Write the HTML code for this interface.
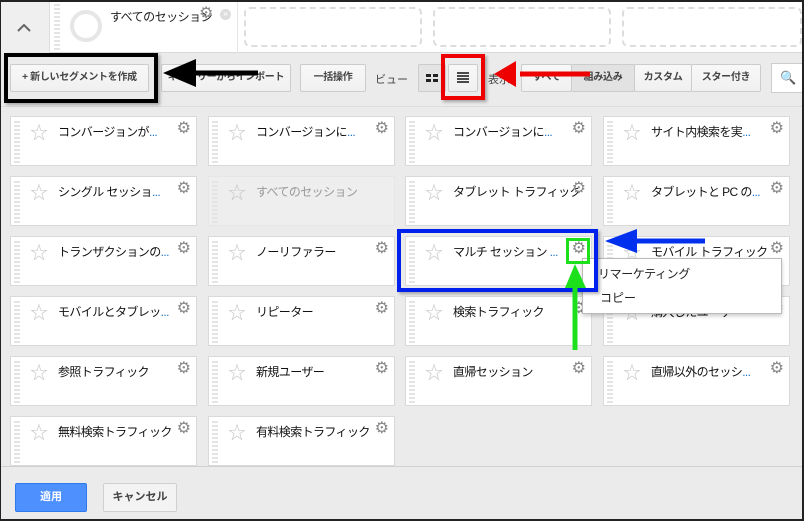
<!DOCTYPE html>
<html><head><meta charset="utf-8">
<style>
*{box-sizing:border-box;margin:0;padding:0}
body{width:804px;height:521px;overflow:hidden;background:#ebebeb;font-family:"Liberation Sans","Noto Sans CJK JP",sans-serif;font-size:12px;color:#222;position:relative}
.abs{position:absolute}
.top{left:0;top:0;width:804px;height:53px;background:#fff;border-bottom:1px solid #d8d8d8}
.chev{left:0;top:0;width:50px;height:53px;background:#efefef;border-right:1px solid #ddd}
.dash{border:2px dashed #ddd;border-radius:6px;top:7px;height:40px}
.btn{border:1px solid #ccc;border-radius:2px;background:linear-gradient(#f8f8f8,#f0f0f0);font-weight:bold;font-size:10px;color:#444;text-align:center;line-height:26px;height:28px;top:64px;white-space:nowrap;overflow:hidden;letter-spacing:-0.3px}
.card{background:#fff;border:1px solid #d9d9d9;width:187px;height:50px}
.card .grip{position:absolute;left:3px;top:4px;width:6px;height:42px;background:repeating-linear-gradient(#e4e4e4 0 2px,transparent 2px 4px)}
.card .st{position:absolute;left:19px;top:2px;font-size:18px;color:#c8c8c8}
.card .t{position:absolute;left:47px;top:6px;font-size:12px;letter-spacing:-0.6px;color:#111;white-space:nowrap;width:125px;overflow:hidden}
.card .g{position:absolute;right:5px;top:1px;font-size:16px;color:#888}
.dots{color:#1a73c8}
</style></head><body>
<div class="abs top"></div>
<div class="abs chev"><svg width="50" height="53"><path d="M18 31 L24 25 L30 31" stroke="#666" stroke-width="2" fill="none"/></svg></div>
<div class="abs" style="left:54px;top:4px;width:6px;height:46px;background:repeating-linear-gradient(#e4e4e4 0 2px,transparent 2px 4px)"></div>
<div class="abs" style="left:70px;top:10px;width:32px;height:32px;border:4px solid #e6e6e6;border-radius:50%"></div>
<div class="abs" style="left:110px;top:8px;font-size:12px;letter-spacing:-0.5px">すべてのセッション</div>
<div class="abs" style="left:199px;top:3px;font-size:16px;color:#888">⚙</div>
<div class="abs" style="left:220px;top:9px;width:11px;height:11px;border-radius:50%;background:#ddd;color:#fff;font-size:9px;line-height:11px;text-align:center">×</div>
<div class="abs" style="left:237px;top:0;width:1px;height:53px;background:#e6e6e6"></div>
<div class="abs dash" style="left:244px;width:178px"></div>
<div class="abs dash" style="left:433px;width:178px"></div>
<div class="abs dash" style="left:622px;width:180px"></div>

<div class="abs btn" style="left:10px;width:139px">+ 新しいセグメントを作成</div>
<div class="abs btn" style="left:161px;width:130px">ギャラリーからインポート</div>
<div class="abs btn" style="left:300px;width:66px">一括操作</div>
<div class="abs" style="left:375px;top:71px;font-size:11px;color:#444">ビュー</div>
<div class="abs btn" style="left:418px;width:28px;background:#e4e4e4"><svg width="26" height="26"><rect x="7" y="9" width="5" height="3" fill="#222"/><rect x="14" y="9" width="5" height="3" fill="#222"/><rect x="7" y="14" width="5" height="3" fill="#222"/><rect x="14" y="14" width="5" height="3" fill="#222"/></svg></div>
<div class="abs btn" style="left:448px;width:30px"><svg width="28" height="26"><path d="M8 8h12M8 11h12M8 14h12M8 17h12" stroke="#111" stroke-width="1.6"/></svg></div>
<div class="abs" style="left:488px;top:71px;font-size:11px;color:#444">表示</div>
<div class="abs btn" style="left:521px;width:51px">すべて</div>
<div class="abs btn" style="left:571px;width:64px;background:#e2e2e2">組み込み</div>
<div class="abs btn" style="left:634px;width:58px">カスタム</div>
<div class="abs btn" style="left:691px;width:70px">スター付き</div>
<div class="abs" style="left:771px;top:63px;width:40px;height:30px;background:#fff;border:1px solid #ccc;color:#bbb;font-size:13px;padding:6px 8px">🔍</div>
<div class="abs" style="left:0;top:106px;width:804px;height:1px;background:#ddd"></div>

<div class="abs card" style="left:10px;top:116px"><div class="grip"></div><div class="st">☆</div><div class="t">コンバージョンが<span class="dots">...</span></div><div class="g">⚙</div></div>
<div class="abs card" style="left:208px;top:116px"><div class="grip"></div><div class="st">☆</div><div class="t">コンバージョンに<span class="dots">...</span></div><div class="g">⚙</div></div>
<div class="abs card" style="left:405px;top:116px"><div class="grip"></div><div class="st">☆</div><div class="t">コンバージョンに<span class="dots">...</span></div><div class="g">⚙</div></div>
<div class="abs card" style="left:603px;top:116px"><div class="grip"></div><div class="st">☆</div><div class="t">サイト内検索を実<span class="dots">...</span></div><div class="g">⚙</div></div>

<div class="abs card" style="left:10px;top:176px"><div class="grip"></div><div class="st">☆</div><div class="t">シングル セッショ<span class="dots">...</span></div><div class="g">⚙</div></div>
<div class="abs card" style="left:208px;top:176px;background:#eee;border-color:#e6e6e6"><div class="grip"></div><div class="st">☆</div><div class="t" style="color:#999">すべてのセッション</div></div>
<div class="abs card" style="left:405px;top:176px"><div class="grip"></div><div class="st">☆</div><div class="t">タブレット トラフィック</div><div class="g">⚙</div></div>
<div class="abs card" style="left:603px;top:176px"><div class="grip"></div><div class="st">☆</div><div class="t">タブレットと PC の<span class="dots">...</span></div><div class="g">⚙</div></div>

<div class="abs card" style="left:10px;top:236px"><div class="grip"></div><div class="st">☆</div><div class="t">トランザクションの<span class="dots">...</span></div><div class="g">⚙</div></div>
<div class="abs card" style="left:208px;top:236px"><div class="grip"></div><div class="st">☆</div><div class="t">ノーリファラー</div><div class="g">⚙</div></div>
<div class="abs card" style="left:405px;top:236px"><div class="grip"></div><div class="st">☆</div><div class="t">マルチ セッション <span class="dots">...</span></div><div class="g">⚙</div></div>
<div class="abs card" style="left:603px;top:236px"><div class="grip"></div><div class="st">☆</div><div class="t">モバイル トラフィック</div><div class="g">⚙</div></div>

<div class="abs card" style="left:10px;top:296px"><div class="grip"></div><div class="st">☆</div><div class="t">モバイルとタブレッ<span class="dots">...</span></div><div class="g">⚙</div></div>
<div class="abs card" style="left:208px;top:296px"><div class="grip"></div><div class="st">☆</div><div class="t">リピーター</div><div class="g">⚙</div></div>
<div class="abs card" style="left:405px;top:296px"><div class="grip"></div><div class="st">☆</div><div class="t">検索トラフィック</div><div class="g">⚙</div></div>
<div class="abs card" style="left:603px;top:296px"><div class="grip"></div><div class="st">☆</div><div class="t">購入したユーザー</div><div class="g">⚙</div></div>

<div class="abs card" style="left:10px;top:356px"><div class="grip"></div><div class="st">☆</div><div class="t">参照トラフィック</div><div class="g">⚙</div></div>
<div class="abs card" style="left:208px;top:356px"><div class="grip"></div><div class="st">☆</div><div class="t">新規ユーザー</div><div class="g">⚙</div></div>
<div class="abs card" style="left:405px;top:356px"><div class="grip"></div><div class="st">☆</div><div class="t">直帰セッション</div><div class="g">⚙</div></div>
<div class="abs card" style="left:603px;top:356px"><div class="grip"></div><div class="st">☆</div><div class="t">直帰以外のセッシ<span class="dots">...</span></div><div class="g">⚙</div></div>

<div class="abs card" style="left:10px;top:416px"><div class="grip"></div><div class="st">☆</div><div class="t">無料検索トラフィック</div><div class="g">⚙</div></div>
<div class="abs card" style="left:208px;top:416px"><div class="grip"></div><div class="st">☆</div><div class="t">有料検索トラフィック</div><div class="g">⚙</div></div>

<div class="abs" style="left:0;top:466px;width:804px;height:1px;background:#d0d0d0"></div>
<div class="abs" style="left:15px;top:483px;width:72px;height:29px;background:#4d90fe;border:1px solid #3079ed;border-radius:2px;color:#fff;font-weight:bold;font-size:11px;text-align:center;line-height:27px">適用</div>
<div class="abs" style="left:103px;top:483px;width:74px;height:29px;background:#f3f3f3;border:1px solid #d0d0d0;border-radius:2px;color:#444;font-weight:bold;font-size:11px;text-align:center;line-height:27px">キャンセル</div>

<div class="abs" style="left:582px;top:258px;width:200px;height:56px;background:#fff;border:1px solid #bbb;box-shadow:0 2px 4px rgba(0,0,0,.2)"></div>
<div class="abs" style="left:598px;top:265px;font-size:12px;letter-spacing:-0.4px">リマーケティング</div>
<div class="abs" style="left:600px;top:289px;font-size:12px">コピー</div>

<div class="abs" style="left:4px;top:53px;width:154px;height:50px;border:4px solid #000;box-shadow:2px 2px 3px rgba(0,0,0,.3)"></div>
<div class="abs" style="left:441px;top:54px;width:44px;height:46px;border:4px solid #e00;box-shadow:2px 2px 3px rgba(0,0,0,.3)"></div>
<div class="abs" style="left:397px;top:229px;width:201px;height:63px;border:4px solid #0020ee;box-shadow:2px 2px 3px rgba(0,0,0,.3)"></div>
<div class="abs" style="left:566px;top:238px;width:24px;height:26px;border:3px solid #1de01d"></div>
<svg class="abs" style="left:0;top:0" width="804" height="521">
<path d="M258 73 L190 73" stroke="#000" stroke-width="5"/><path d="M163 73 L196 59 L196 87 Z" fill="#000"/>
<path d="M590 74 L520 74" stroke="#e00" stroke-width="5"/><path d="M494 74 L516 61 L516 87 Z" fill="#e00"/>
<path d="M705 241 L630 241" stroke="#0030ee" stroke-width="5"/><path d="M605 241 L637 229 L637 253 Z" fill="#0030ee"/>
<path d="M575 350 L575 285" stroke="#1de01d" stroke-width="5"/><path d="M575 264 L565 288 L586 288 Z" fill="#1de01d"/>
</svg>
<div class="abs" style="left:0;top:0;width:804px;height:521px;border:1px solid #222;border-top-width:2px;border-right-width:2px;border-bottom-width:2px"></div>
</body></html>
